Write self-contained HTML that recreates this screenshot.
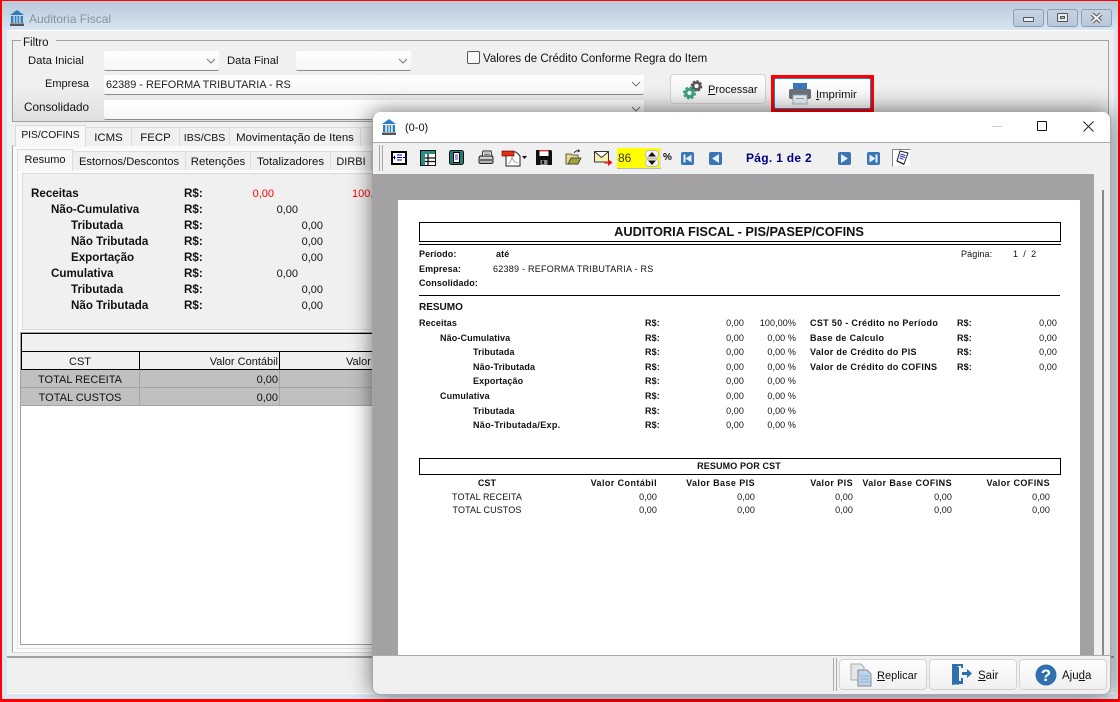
<!DOCTYPE html>
<html><head><meta charset="utf-8"><style>
html,body{margin:0;padding:0;width:1120px;height:702px;overflow:hidden;background:#f00}
*{box-sizing:border-box}
body{font-family:"Liberation Sans",sans-serif;font-size:11px;color:#111;position:relative}
.a{position:absolute}
.t{position:absolute;white-space:nowrap;line-height:14px;height:14px;transform:translateY(-6px)}
.r{transform:translate(-100%,-6px)}
.c{transform:translate(-50%,-6px)}
.b{font-weight:bold}
.l{font-size:11.6px;font-weight:bold}
.combo{position:absolute;background:linear-gradient(#fff,#f6f6f6);border-bottom:1px solid #8c8c8c;border-radius:2px}
.tab{position:absolute;background:#f0f0f0;border:1px solid #dcdcdc;border-bottom:none;text-align:center;line-height:20px;height:19px;white-space:nowrap;font-size:11.4px}
.tab.on{background:#f7f7f7;z-index:2;font-size:11px}
.wb{position:absolute;top:9px;height:18px;width:31px;border:1px solid #8b9eb2;border-radius:3px;background:linear-gradient(#c6d3e1,#b8c8da)}
.btn{position:absolute;background:linear-gradient(#fdfdfd,#f0f0f0);border:1px solid #d2d2d2;border-radius:4px}
.p{font-size:9px;letter-spacing:.1px}
.p.b{letter-spacing:.12px}
.t.p{transform:translateY(-7px)}
.t.p.r{transform:translate(-100%,-7px)}
.t.p.c{transform:translate(-50%,-7px)}
.h{letter-spacing:.42px !important}
u{text-decoration:underline}
svg{position:absolute;overflow:visible}
.navb{position:absolute;top:152px;width:13px;height:13px;background:#3b76b4;border-radius:2px}
</style></head><body>
<!-- window frame -->
<div class="a" style="left:2px;top:1px;width:1116px;height:698px;background:linear-gradient(#b9c8d9 0,#d9e6f3 30px);"></div>
<div class="a" style="left:7px;top:30px;width:1107px;height:664px;background:#f0f0f0;border-top:1px solid #fff;border-bottom:1px solid #fff"></div>
<svg style="left:9px;top:9px" width="16" height="18" viewBox="0 0 16 18"><path d="M1 6L8 1l7 5z" fill="#2f7fc0"/><path d="M2 7h2.400v7H2zM5.800 7h1.600v7H5.800zM8.600 7h1.600v7H8.600zM11.600 7H14v7h-2.400z" fill="#2f7fc0"/><rect x="1" y="14.500" width="14" height="2.500" fill="#555"/></svg>
<div class="t" style="left:29px;top:18px;color:#88929c;font-size:12px">Auditoria Fiscal</div>
<div class="wb" style="left:1013px"><div class="a" style="left:9px;top:7px;width:11px;height:5px;background:#e8edf3;border:1px solid #555;border-radius:1px"></div></div>
<div class="wb" style="left:1047px"><div class="a" style="left:9px;top:3px;width:11px;height:9px;background:#e8edf3;border:1px solid #555;border-radius:1px"></div><div class="a" style="left:12px;top:6px;width:5px;height:3px;background:#b8c8da;border:1px solid #555"></div></div>
<div class="wb" style="left:1081px"><svg style="left:8px;top:2px" width="14" height="12"><path d="M2 2l9 8M11 2l-9 8" stroke="#555" stroke-width="4"/><path d="M2 2l9 8M11 2l-9 8" stroke="#eef2f6" stroke-width="2"/></svg></div>

<!-- filtro group -->
<div class="a" style="left:12px;top:40px;width:1097px;height:82px;border:1px solid #a0a0a0;background:linear-gradient(#f0f0f0 55%,#dfdfdf 100%)"></div>
<div class="a" style="left:21px;top:35px;width:35px;height:12px;background:#f0f0f0"></div>
<div class="t" style="left:23px;top:42px;font-size:11.5px">Filtro</div>
<div class="t" style="left:28px;top:60px;font-size:11.3px">Data Inicial</div>
<div class="combo" style="left:104px;top:51px;width:115px;height:20px"></div>
<svg style="left:206px;top:58px" width="11" height="7"><path d="M1 1l4 4 4-4" fill="none" stroke="#777"/></svg>
<div class="t" style="left:227px;top:60px;font-size:11.3px">Data Final</div>
<div class="combo" style="left:296px;top:51px;width:115px;height:20px"></div>
<svg style="left:398px;top:58px" width="11" height="7"><path d="M1 1l4 4 4-4" fill="none" stroke="#777"/></svg>
<div class="a" style="left:467px;top:51px;width:13px;height:13px;background:#fafafa;border:1px solid #555;border-radius:2px"></div>
<div class="t" style="left:483px;top:58px;font-size:11.5px">Valores de Crédito Conforme Regra do Item</div>
<div class="t" style="left:45px;top:83px;font-size:11px">Empresa</div>
<div class="combo" style="left:104px;top:75px;width:540px;height:20px"></div>
<div class="t" style="left:106px;top:84px;font-size:10.9px;color:#222">62389 - REFORMA TRIBUTARIA - RS</div>
<svg style="left:631px;top:81px" width="11" height="7"><path d="M1 1l4 4 4-4" fill="none" stroke="#777"/></svg>
<div class="t" style="left:24px;top:107px;font-size:11.7px">Consolidado</div>
<div class="combo" style="left:104px;top:100px;width:540px;height:20px"></div>
<svg style="left:631px;top:106px" width="11" height="7"><path d="M1 1l4 4 4-4" fill="none" stroke="#777"/></svg>

<div class="btn" style="left:670px;top:74px;width:96px;height:30px"></div>
<svg style="left:682px;top:79px" width="22" height="22" viewBox="0 0 22 22"><circle cx="14.500" cy="7" r="4" fill="none" stroke="#555" stroke-width="3.600" stroke-dasharray="2 1.100"/><circle cx="14.500" cy="7" r="3.500" fill="none" stroke="#555" stroke-width="2.400"/><circle cx="7.500" cy="14" r="4.500" fill="none" stroke="#3fa07c" stroke-width="4" stroke-dasharray="2.200 1.300"/><circle cx="7.500" cy="14" r="3.600" fill="none" stroke="#3fa07c" stroke-width="3"/></svg>
<div class="t" style="left:708px;top:89px;font-size:11px"><u>P</u>rocessar</div>
<div class="a" style="left:771px;top:75px;width:103px;height:37px;border:3px solid #f00;background:#f00"></div>
<div class="a" style="left:774px;top:78px;width:97px;height:31px;border:1px solid #2f7fc8;border-radius:2px;background:linear-gradient(#fff,#f3f3f3)"></div>
<svg style="left:788px;top:82px" width="24" height="24" viewBox="0 0 24 24"><rect x="5" y="1" width="14" height="7" fill="#3a78b8"/><rect x="1" y="7" width="22" height="10" rx="2" fill="#6d7278"/><rect x="5" y="13" width="14" height="9" fill="#e6eef5" stroke="#8aa" stroke-width=".8"/><rect x="8" y="16" width="8" height="1" fill="#9ab"/></svg>
<div class="t" style="left:816px;top:94px;font-size:11.3px"><u>I</u>mprimir</div>

<!-- tabs level 1 -->
<div class="a" style="left:12px;top:145px;width:1096px;height:508px;border:1px solid #d9d9d9;border-left:1px solid #a5a5a5;background:#fbfbfb"></div>
<div class="tab" style="left:85px;top:127px;width:47px">ICMS</div>
<div class="tab" style="left:131px;top:127px;width:49px">FECP</div>
<div class="tab" style="left:179px;top:127px;width:51px;font-size:10.5px">IBS/CBS</div>
<div class="tab" style="left:229px;top:127px;width:132px">Movimentação de Itens</div>
<div class="tab" style="left:360px;top:127px;width:20px"></div>
<div class="tab on" style="left:15px;top:125px;width:71px;height:22px;line-height:20px;font-size:10.3px">PIS/COFINS</div>
<!-- tabs level 2 -->
<div class="a" style="left:17px;top:169px;width:1088px;height:480px;border:1px solid #e2e2e2;background:#fafafa"></div>
<div class="tab" style="left:72px;top:151px;width:114px;height:19px;font-size:11.2px">Estornos/Descontos</div>
<div class="tab" style="left:185px;top:151px;width:66px;height:19px">Retenções</div>
<div class="tab" style="left:250px;top:151px;width:81px;height:19px">Totalizadores</div>
<div class="tab" style="left:330px;top:151px;width:42px;height:19px;font-size:11px">DIRBI</div>
<div class="tab on" style="left:17px;top:149px;width:56px;height:22px;line-height:20px">Resumo</div>
<div class="a" style="left:22px;top:173px;width:400px;height:157px;background:#f0f0f0;border:1px solid #dcdcdc"></div>
<!-- left rows -->
<div class="t l" style="left:31px;top:193px">Receitas</div>
<div class="t l" style="left:51px;top:209px">Não-Cumulativa</div>
<div class="t l" style="left:71px;top:225px">Tributada</div>
<div class="t l" style="left:71px;top:241px">Não Tributada</div>
<div class="t l" style="left:71px;top:257px">Exportação</div>
<div class="t l" style="left:51px;top:273px">Cumulativa</div>
<div class="t l" style="left:71px;top:289px">Tributada</div>
<div class="t l" style="left:71px;top:305px">Não Tributada</div>
<div class="t l" style="left:184px;top:193px">R$:</div><div class="t l" style="left:184px;top:209px">R$:</div><div class="t l" style="left:184px;top:225px">R$:</div><div class="t l" style="left:184px;top:241px">R$:</div><div class="t l" style="left:184px;top:257px">R$:</div><div class="t l" style="left:184px;top:273px">R$:</div><div class="t l" style="left:184px;top:289px">R$:</div><div class="t l" style="left:184px;top:305px">R$:</div>
<div class="t r" style="left:274px;top:193px;color:#f00">0,00</div>
<div class="t" style="left:352px;top:193px;color:#f00">100,00</div>
<div class="t r" style="left:298px;top:209px">0,00</div>
<div class="t r" style="left:323px;top:225px">0,00</div>
<div class="t r" style="left:323px;top:241px">0,00</div>
<div class="t r" style="left:323px;top:257px">0,00</div>
<div class="t r" style="left:298px;top:273px">0,00</div>
<div class="t r" style="left:323px;top:289px">0,00</div>
<div class="t r" style="left:323px;top:305px">0,00</div>
<!-- grid -->
<div class="a" style="left:20px;top:332px;width:400px;height:313px;background:#fff;border:1px solid #a0a0a0"></div>
<div class="a" style="left:21px;top:333px;width:400px;height:19px;background:#f0f0f0;border:1px solid #000"></div>
<div class="a" style="left:21px;top:351px;width:400px;height:19px;background:#f0f0f0;border:1px solid #000"></div>
<div class="a" style="left:139px;top:351px;width:1px;height:19px;background:#000"></div>
<div class="a" style="left:279px;top:351px;width:1px;height:19px;background:#000"></div>
<div class="t c" style="left:80px;top:361px">CST</div>
<div class="t r" style="left:278px;top:361px">Valor Contábil</div>
<div class="t" style="left:346px;top:361px">Valor</div>
<div class="a" style="left:21px;top:370px;width:400px;height:18px;background:#c0c0c0;border-bottom:1px solid #a5a5a5"></div>
<div class="a" style="left:21px;top:388px;width:400px;height:18px;background:#c0c0c0;border-bottom:1px solid #a5a5a5"></div>
<div class="a" style="left:139px;top:370px;width:1px;height:36px;background:#a5a5a5"></div>
<div class="a" style="left:279px;top:370px;width:1px;height:36px;background:#a5a5a5"></div>
<div class="t c" style="left:80px;top:379px">TOTAL RECEITA</div>
<div class="t c" style="left:80px;top:397px">TOTAL CUSTOS</div>
<div class="t r" style="left:278px;top:379px">0,00</div>
<div class="t r" style="left:278px;top:397px">0,00</div>
<!-- bottom line -->
<div class="a" style="left:7px;top:656px;width:1107px;height:2px;background:#a0a0a0"></div>

<!-- modal -->
<div class="a" style="left:372px;top:112px;width:739px;height:583px;background:#f0f0f0;border-radius:8px;box-shadow:0 0 22px rgba(0,0,0,.55);overflow:hidden;border-right:1px solid #aaa;border-bottom:1px solid #aaa;border-left:1px solid #a5a5a5">
<div class="a" style="left:0;top:0;width:739px;height:31px;background:#fff;border-bottom:1px solid #aaa"></div>
<div class="a" style="left:0;top:62px;width:739px;height:482px;background:#a3a1a3"></div>
<div class="a" style="left:25px;top:88px;width:682px;height:456px;background:#fff"></div>
<div class="a" style="left:721px;top:62px;width:18px;height:482px;background:#f0f0f0"></div>
<div class="a" style="left:729px;top:78px;width:2px;height:466px;background:#8a8a8a"></div>
<div class="a" style="left:0;top:543px;width:739px;height:1px;background:#aaa"></div>
</div>
<svg style="left:381px;top:118px" width="16" height="18" viewBox="0 0 16 18"><path d="M1 6L8 1l7 5z" fill="#2f7fc0"/><path d="M2 7h2.400v7H2zM5.800 7h1.600v7H5.800zM8.600 7h1.600v7H8.600zM11.600 7H14v7h-2.400z" fill="#2f7fc0"/><rect x="1" y="14.500" width="14" height="2.500" fill="#555"/></svg>
<div class="t" style="left:405px;top:127px;font-size:11px">(0-0)</div>
<div class="a" style="left:992px;top:126px;width:10px;height:1px;background:#ccc"></div>
<div class="a" style="left:1037px;top:121px;width:10px;height:10px;border:1px solid #111;border-radius:1px"></div>
<svg style="left:1083px;top:121px" width="11" height="11"><path d="M.5.5l10 10M10.500.5l-10 10" stroke="#222"/></svg>
<!-- toolbar -->
<div class="a" style="left:379px;top:145px;width:4px;height:26px;border-left:1px solid #aaa;border-right:1px solid #aaa"></div>
<svg style="left:391px;top:151px" width="16" height="14" viewBox="0 0 16 14"><rect x="1" y="1" width="14" height="12" fill="#fff" stroke="#000" stroke-width="2"/><path d="M6 4h5M6 6.500h5M6 9h5" stroke="#00c"/><path d="M1 6.500h3.500M15 6.500h-3M3.500 4.800v3.400" stroke="#008"/></svg>
<svg style="left:420px;top:150px" width="16" height="16" viewBox="0 0 16 16"><rect x="0" y="0" width="16" height="16" fill="#111"/><rect x="1" y="1" width="14" height="3" fill="#2a8a88"/><rect x="1" y="4" width="4" height="11" fill="#2a8a88"/><rect x="5" y="4" width="10" height="11" fill="#fff"/><path d="M5 8h10M5 11.500h10M8 4v11" stroke="#111" stroke-width="1.300"/></svg>
<svg style="left:449px;top:150px" width="15" height="15" viewBox="0 0 15 15"><rect x=".5" y=".5" width="14" height="14" rx="2" fill="#2a7a78" stroke="#111"/><rect x="4.500" y="2.500" width="6" height="10" fill="#fff" stroke="#000"/><path d="M6 5h3M6 7h3M6 9h3" stroke="#00a" stroke-width=".8"/></svg>
<svg style="left:478px;top:150px" width="16" height="15" viewBox="0 0 16 15"><path d="M5 1h8l1 5H4z" fill="#fff" stroke="#222"/><path d="M6 3h6M6 4.500h6" stroke="#555" stroke-width=".7"/><path d="M1 8q0-2 2-2h10q2 0 2 2v4q0 1.500-2 1.500H3q-2 0-2-1.500z" fill="#b5b5b5" stroke="#222"/><path d="M2 10h12" stroke="#222"/><path d="M2 8h12" stroke="#eee"/></svg>
<svg style="left:502px;top:150px" width="26" height="17" viewBox="0 0 26 17"><path d="M4 2h10l4 4v10H4z" fill="#fff" stroke="#222"/><rect x="0" y="1" width="12" height="5" fill="#e03015" stroke="#400" stroke-width=".6"/><path d="M6 14q3-2 4-7 1 5 6 6" fill="none" stroke="#aaa"/><path d="M20 6h5l-2.500 3z" fill="#111"/></svg>
<svg style="left:536px;top:150px" width="16" height="15" viewBox="0 0 16 15"><path d="M0 0h15l1 1v14H0z" fill="#111"/><rect x="3.500" y="0" width="9" height="6" fill="#fff"/><path d="M3.500 0h9v1.400h-9z" fill="#e03030"/><rect x="4.500" y="10" width="7" height="5" fill="#888"/><rect x="6" y="10.500" width="2" height="3.500" fill="#111"/></svg>
<svg style="left:565px;top:149px" width="17" height="16" viewBox="0 0 17 16"><path d="M1 5h5l1 1h6v9H1z" fill="#e9d98b" stroke="#333" stroke-width=".8"/><path d="M3 15l3-6h10l-3 6z" fill="#a5a13a" stroke="#333" stroke-width=".8"/><path d="M9 4q2-3 5-2M13 .5l1.500 1.500-1.800 1" fill="none" stroke="#333"/></svg>
<svg style="left:594px;top:151px" width="19" height="16" viewBox="0 0 19 16"><rect x=".5" y=".5" width="14" height="10.500" fill="#f5efb0" stroke="#333"/><path d="M1 1l6.500 5.500L14 1" fill="#fff" stroke="#333"/><path d="M10.500 10.500H14V8l4.500 3.500-4.500 3.500v-2.500h-3.500z" fill="#e01818"/></svg>
<div class="a" style="left:617px;top:148px;width:44px;height:21px;background:#ff0;border-bottom:1px solid #bbb;border-right:1px solid #ddd"></div>
<div class="t" style="left:618px;top:157px;color:#333;font-size:12px">86</div>
<svg style="left:645px;top:150px" width="14" height="17" viewBox="0 0 14 17"><rect x=".5" y=".5" width="13" height="7.500" rx="3" fill="#f4f4f4" stroke="#bbb"/><rect x=".5" y="9" width="13" height="7.500" rx="3" fill="#f4f4f4" stroke="#bbb"/><path d="M3 6.500L7 2l4 4.500z" fill="#111"/><path d="M3 10.500L7 15l4-4.500z" fill="#111"/></svg>
<div class="t b" style="left:663px;top:157px;font-size:10px">%</div>
<div class="navb" style="left:681px"><svg width="13" height="13"><path d="M2.500 2.500h2v8h-2zM10.500 2.500v8L4.500 6.500z" fill="#e6f0f8"/></svg></div>
<div class="navb" style="left:709px"><svg width="13" height="13"><path d="M10 2v9L3 6.500z" fill="#e6f0f8"/></svg></div>
<div class="t b" style="left:746px;top:157px;color:#00007f;font-size:12px;letter-spacing:.3px">Pág. 1 de 2</div>
<div class="navb" style="left:838px"><svg width="13" height="13"><path d="M3 2v9l7-4.500z" fill="#e6f0f8"/></svg></div>
<div class="navb" style="left:867px"><svg width="13" height="13"><path d="M2.500 2.500v8l6-4zM8.500 2.500h2v8h-2z" fill="#e6f0f8"/></svg></div>
<div class="a" style="left:892px;top:149px;width:19px;height:18px;background:#fff;border-left:1px solid #888;border-top:1px solid #888;border-right:1px solid #eee;border-bottom:1px solid #eee"></div>
<svg style="left:894px;top:150px" width="16" height="16" viewBox="0 0 16 16"><path d="M6 1l8 2-4 11-7-3z" fill="#fff" stroke="#222"/><path d="M6.500 4l5 1.500M6 6l5 1.500M5.500 8l4 1.300" stroke="#22c"/><path d="M3 11l7 3.500" stroke="#222"/></svg>

<!-- report -->
<div class="a" style="left:419px;top:222px;width:642px;height:20px;border:1px solid #000"></div>
<div class="a" style="left:419px;top:244px;width:642px;height:1px;background:#000"></div>
<div class="t b c" style="left:739px;top:231px;font-size:12.8px">AUDITORIA FISCAL - PIS/PASEP/COFINS</div>
<div class="t p b" style="left:419px;top:254px">Período:</div><div class="t p b" style="left:496px;top:254px">até</div>
<div class="t p" style="left:961px;top:254px">Página:</div><div class="t p" style="left:1013px;top:254px">1&nbsp;&nbsp;/&nbsp;&nbsp;2</div>
<div class="t p b" style="left:419px;top:269px">Empresa:</div><div class="t p" style="left:493px;top:269px;letter-spacing:.25px">62389 - REFORMA TRIBUTARIA - RS</div>
<div class="t p b" style="left:419px;top:283px">Consolidado:</div>
<div class="a" style="left:419px;top:295px;width:641px;height:1px;background:#000"></div>
<div class="t b" style="left:419px;top:307px;font-size:10px">RESUMO</div>
<div class="t p b" style="left:419px;top:323px">Receitas</div>
<div class="t p b" style="left:440px;top:338px">Não-Cumulativa</div>
<div class="t p b" style="left:473px;top:352px">Tributada</div>
<div class="t p b" style="left:473px;top:367px">Não-Tributada</div>
<div class="t p b" style="left:473px;top:381px">Exportação</div>
<div class="t p b" style="left:440px;top:396px">Cumulativa</div>
<div class="t p b" style="left:473px;top:411px">Tributada</div>
<div class="t p b" style="left:473px;top:425px;letter-spacing:.3px">Não-Tributada/Exp.</div>
<div class="t p b" style="left:645px;top:323px">R$:</div><div class="t p b" style="left:645px;top:338px">R$:</div><div class="t p b" style="left:645px;top:352px">R$:</div><div class="t p b" style="left:645px;top:367px">R$:</div><div class="t p b" style="left:645px;top:381px">R$:</div><div class="t p b" style="left:645px;top:396px">R$:</div><div class="t p b" style="left:645px;top:411px">R$:</div><div class="t p b" style="left:645px;top:425px">R$:</div>
<div class="t p r" style="left:744px;top:323px">0,00</div><div class="t p r" style="left:744px;top:338px">0,00</div><div class="t p r" style="left:744px;top:352px">0,00</div><div class="t p r" style="left:744px;top:367px">0,00</div><div class="t p r" style="left:744px;top:381px">0,00</div><div class="t p r" style="left:744px;top:396px">0,00</div><div class="t p r" style="left:744px;top:411px">0,00</div><div class="t p r" style="left:744px;top:425px">0,00</div>
<div class="t p r" style="left:796px;top:323px">100,00%</div><div class="t p r" style="left:796px;top:338px">0,00 %</div><div class="t p r" style="left:796px;top:352px">0,00 %</div><div class="t p r" style="left:796px;top:367px">0,00 %</div><div class="t p r" style="left:796px;top:381px">0,00 %</div><div class="t p r" style="left:796px;top:396px">0,00 %</div><div class="t p r" style="left:796px;top:411px">0,00 %</div><div class="t p r" style="left:796px;top:425px">0,00 %</div>
<div class="t p b" style="left:810px;top:323px;letter-spacing:.32px">CST 50 - Crédito no Período</div>
<div class="t p b" style="left:810px;top:338px;letter-spacing:.32px">Base de Calculo</div>
<div class="t p b" style="left:810px;top:352px;letter-spacing:.32px">Valor de Crédito do PIS</div>
<div class="t p b" style="left:810px;top:367px;letter-spacing:.32px">Valor de Crédito do COFINS</div>
<div class="t p b" style="left:957px;top:323px">R$:</div><div class="t p b" style="left:957px;top:338px">R$:</div><div class="t p b" style="left:957px;top:352px">R$:</div><div class="t p b" style="left:957px;top:367px">R$:</div>
<div class="t p r" style="left:1057px;top:323px">0,00</div><div class="t p r" style="left:1057px;top:338px">0,00</div><div class="t p r" style="left:1057px;top:352px">0,00</div><div class="t p r" style="left:1057px;top:367px">0,00</div>
<div class="a" style="left:419px;top:458px;width:642px;height:17px;border:1px solid #000"></div>
<div class="t p b c" style="left:739px;top:466px">RESUMO POR CST</div>
<div class="t p b c" style="left:487px;top:483px">CST</div>
<div class="t p b r h" style="left:657px;top:483px">Valor Contábil</div>
<div class="t p b r h" style="left:755px;top:483px">Valor Base PIS</div>
<div class="t p b r h" style="left:853px;top:483px">Valor PIS</div>
<div class="t p b r h" style="left:952px;top:483px">Valor Base COFINS</div>
<div class="t p b r h" style="left:1050px;top:483px">Valor COFINS</div>
<div class="t p c" style="left:487px;top:497px">TOTAL RECEITA</div>
<div class="t p c" style="left:487px;top:510px">TOTAL CUSTOS</div>
<div class="t p r" style="left:657px;top:497px">0,00</div><div class="t p r" style="left:755px;top:497px">0,00</div><div class="t p r" style="left:853px;top:497px">0,00</div><div class="t p r" style="left:952px;top:497px">0,00</div><div class="t p r" style="left:1050px;top:497px">0,00</div>
<div class="t p r" style="left:657px;top:510px">0,00</div><div class="t p r" style="left:755px;top:510px">0,00</div><div class="t p r" style="left:853px;top:510px">0,00</div><div class="t p r" style="left:952px;top:510px">0,00</div><div class="t p r" style="left:1050px;top:510px">0,00</div>

<!-- footer buttons -->
<div class="a" style="left:833px;top:658px;width:4px;height:33px;border-left:1px solid #aaa;border-right:1px solid #aaa"></div>
<div class="btn" style="left:839px;top:659px;width:88px;height:31px"></div>
<svg style="left:850px;top:663px" width="22" height="24" viewBox="0 0 22 24"><path d="M1 1h10l3 3v13H1z" fill="#e4e6ea" stroke="#aaa"/><path d="M8 7h9l4 4v12H8z" fill="#bcd3ea" stroke="#889"/><path d="M10 13h9M10 16h9M10 19h9" stroke="#8fb0d0"/></svg>
<div class="t" style="left:877px;top:675px;font-size:11px"><u>R</u>eplicar</div>
<div class="btn" style="left:929px;top:659px;width:88px;height:31px"></div>
<svg style="left:951px;top:663px" width="23" height="22" viewBox="0 0 23 22"><path d="M1 1h11v4h-2V3H6v15h4v-3h2v6H8l-7 1z" fill="#2f6fae"/><path d="M1 1l7 3v18l-7-2z" fill="#2f6fae"/><path d="M11 9h5V6l5 4.500-5 4.500v-3h-5z" fill="#2f6fae"/></svg>
<div class="t" style="left:978px;top:675px;font-size:11.5px"><u>S</u>air</div>
<div class="btn" style="left:1019px;top:659px;width:88px;height:31px"></div>
<svg style="left:1035px;top:664px" width="22" height="22" viewBox="0 0 22 22"><circle cx="11" cy="11" r="10.500" fill="#2f6fae"/><text x="11" y="17" text-anchor="middle" font-family="Liberation Sans" font-weight="bold" font-size="17" fill="#fff">?</text></svg>
<div class="t" style="left:1062px;top:675px;font-size:11.5px">Aju<u>d</u>a</div>
</body></html>
